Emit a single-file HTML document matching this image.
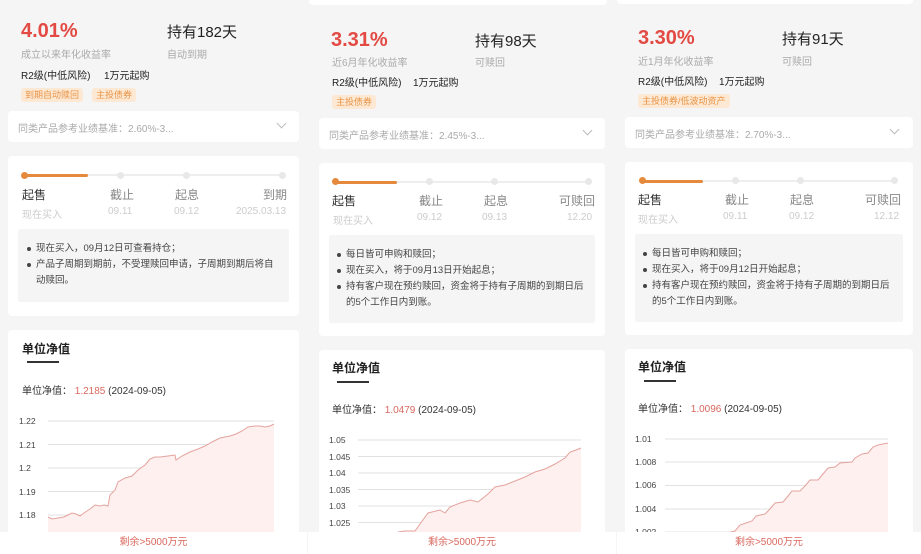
<!DOCTYPE html>
<html><head><meta charset="utf-8">
<style>
*{margin:0;padding:0;box-sizing:border-box}
body{width:921px;height:553px;overflow:hidden;background:#f5f5f5;position:relative;font-family:"Liberation Sans","Noto Sans CJK SC",sans-serif;color:#333}
.a{position:absolute;white-space:nowrap}
.rate{font-size:20px;font-weight:bold;color:#e24a43}
.hold{font-size:15px;color:#222}
.sub{font-size:10px;color:#aaa}
.r2{font-size:10px;color:#222}
.tag{font-size:9px;color:#e89346;background:#fde9d3;border-radius:3px;padding:1px 4px;line-height:12px}
.card{position:absolute;background:#fff;border-radius:4px}
.bench{font-size:10px;color:#aaa}
.chev{width:7px;height:7px;border-right:1px solid #bbb;border-bottom:1px solid #bbb;transform:rotate(45deg)}
.track{height:2px;background:#eee}
.prog{height:3px;background:#e58a3c;border-radius:2px}
.dot{width:7px;height:7px;border-radius:50%;background:#e8e8e8}
.dot.on{background:#e58a3c}
.lab{font-size:12px;color:#888}
.lab.on{color:#333}
.dt{font-size:10px;color:#ccc}
.note{position:absolute;background:#f5f5f5;border-radius:2px}
.note p{font-size:9.5px;color:#444;line-height:16px;padding-left:9px;position:relative}
.note p.b:before{content:"";position:absolute;left:0;top:6px;width:4px;height:4px;border-radius:50%;background:#444}
.ttl{font-size:12px;font-weight:bold;color:#222}
.ul{height:2px;background:#333}
.nv{font-size:10px;color:#333}
.nv span{color:#d9685e}
.ax{font-size:8.5px;color:#444}
.bot{position:absolute;background:#fff;height:22px;text-align:center;font-size:10px;color:#d9685e;line-height:22px}
</style></head><body>

<div class="card" style="left:309px;top:0;width:298px;height:5px;border-radius:0 0 4px 4px"></div>
<div class="card" style="left:617px;top:0;width:296px;height:4px;border-radius:0 0 4px 4px"></div>

<!-- PANEL 1 -->
<div class="a rate" style="left:21px;top:20px">4.01%</div>
<div class="a hold" style="left:167px;top:21px">持有182天</div>
<div class="a sub" style="left:21px;top:46px">成立以来年化收益率</div>
<div class="a sub" style="left:167px;top:46px">自动到期</div>
<div class="a r2" style="left:21px;top:67px">R2级(中低风险)</div>
<div class="a r2" style="left:104px;top:67px">1万元起购</div>
<div class="a tag" style="left:21px;top:88px">到期自动赎回</div>
<div class="a tag" style="left:92px;top:88px">主投债券</div>
<div class="card" style="left:8px;top:111px;width:291px;height:31px"></div>
<div class="a bench" style="left:18px;top:120px">同类产品参考业绩基准：2.60%-3...</div>
<div class="a chev" style="left:278px;top:120px"></div>
<div class="card" style="left:8px;top:156px;width:291px;height:160px"></div>
<div class="a track" style="left:26px;top:174px;width:256px"></div>
<div class="a prog" style="left:26px;top:174px;width:62px"></div>
<div class="a dot on" style="left:21px;top:172px"></div>
<div class="a dot" style="left:117px;top:172px"></div>
<div class="a dot" style="left:183px;top:172px"></div>
<div class="a dot" style="left:279px;top:172px"></div>
<div class="a lab on" style="left:22px;top:186px">起售</div>
<div class="a lab" style="left:110px;top:186px">截止</div>
<div class="a lab" style="left:175px;top:186px">起息</div>
<div class="a lab" style="left:263px;top:186px">到期</div>
<div class="a dt" style="left:22px;top:206px">现在买入</div>
<div class="a dt" style="left:108px;top:206px">09.11</div>
<div class="a dt" style="left:174px;top:206px">09.12</div>
<div class="a dt" style="left:236px;top:206px">2025.03.13</div>
<div class="note" style="left:18px;top:229px;width:271px;height:73px;padding:12px 0 0 9px">
<p class="b">现在买入，09月12日可查看持仓；</p>
<p class="b">产品子周期到期前，不受理赎回申请，子周期到期后将自</p>
<p>动赎回。</p></div>
<div class="card" style="left:8px;top:330px;width:291px;height:223px"></div>
<div class="a ttl" style="left:22px;top:340px">单位净值</div>
<div class="a ul" style="left:27px;top:361px;width:32px"></div>
<div class="a nv" style="left:22px;top:382px">单位净值：&nbsp;<span>1.2185</span> (2024-09-05)</div>
<div class="a ax" style="left:19px;top:416px">1.22</div>
<div class="a ax" style="left:19px;top:440px">1.21</div>
<div class="a ax" style="left:19px;top:463px">1.2</div>
<div class="a ax" style="left:19px;top:487px">1.19</div>
<div class="a ax" style="left:19px;top:510px">1.18</div>

<!-- PANEL 2 -->
<div class="a rate" style="left:331px;top:29px">3.31%</div>
<div class="a hold" style="left:475px;top:30px">持有98天</div>
<div class="a sub" style="left:332px;top:54px">近6月年化收益率</div>
<div class="a sub" style="left:475px;top:54px">可赎回</div>
<div class="a r2" style="left:332px;top:74px">R2级(中低风险)</div>
<div class="a r2" style="left:413px;top:74px">1万元起购</div>
<div class="a tag" style="left:332px;top:95px">主投债券</div>
<div class="card" style="left:319px;top:118px;width:286px;height:31px"></div>
<div class="a bench" style="left:329px;top:127px">同类产品参考业绩基准：2.45%-3...</div>
<div class="a chev" style="left:584px;top:127px"></div>
<div class="card" style="left:319px;top:163px;width:286px;height:173px"></div>
<div class="a track" style="left:336px;top:181px;width:254px"></div>
<div class="a prog" style="left:336px;top:181px;width:61px"></div>
<div class="a dot on" style="left:332px;top:178px"></div>
<div class="a dot" style="left:426px;top:178px"></div>
<div class="a dot" style="left:491px;top:178px"></div>
<div class="a dot" style="left:585px;top:178px"></div>
<div class="a lab on" style="left:332px;top:192px">起售</div>
<div class="a lab" style="left:419px;top:192px">截止</div>
<div class="a lab" style="left:484px;top:192px">起息</div>
<div class="a lab" style="left:559px;top:192px">可赎回</div>
<div class="a dt" style="left:333px;top:212px">现在买入</div>
<div class="a dt" style="left:417px;top:212px">09.12</div>
<div class="a dt" style="left:482px;top:212px">09.13</div>
<div class="a dt" style="left:567px;top:212px">12.20</div>
<div class="note" style="left:329px;top:235px;width:266px;height:88px;padding:12px 0 0 8px">
<p class="b">每日皆可申购和赎回；</p>
<p class="b">现在买入，将于09月13日开始起息；</p>
<p class="b">持有客户现在预约赎回，资金将于持有子周期的到期日后</p>
<p>的5个工作日内到账。</p></div>
<div class="card" style="left:319px;top:350px;width:286px;height:203px"></div>
<div class="a ttl" style="left:332px;top:359px">单位净值</div>
<div class="a ul" style="left:337px;top:381px;width:32px"></div>
<div class="a nv" style="left:332px;top:401px">单位净值：&nbsp;<span>1.0479</span> (2024-09-05)</div>
<div class="a ax" style="left:329px;top:435px">1.05</div>
<div class="a ax" style="left:329px;top:452px">1.045</div>
<div class="a ax" style="left:329px;top:468px">1.04</div>
<div class="a ax" style="left:329px;top:485px">1.035</div>
<div class="a ax" style="left:329px;top:501px">1.03</div>
<div class="a ax" style="left:329px;top:518px">1.025</div>

<!-- PANEL 3 -->
<div class="a rate" style="left:638px;top:27px">3.30%</div>
<div class="a hold" style="left:782px;top:28px">持有91天</div>
<div class="a sub" style="left:638px;top:53px">近1月年化收益率</div>
<div class="a sub" style="left:782px;top:53px">可赎回</div>
<div class="a r2" style="left:638px;top:73px">R2级(中低风险)</div>
<div class="a r2" style="left:719px;top:73px">1万元起购</div>
<div class="a tag" style="left:638px;top:94px">主投债券/低波动资产</div>
<div class="card" style="left:625px;top:117px;width:288px;height:31px"></div>
<div class="a bench" style="left:635px;top:126px">同类产品参考业绩基准：2.70%-3...</div>
<div class="a chev" style="left:891px;top:126px"></div>
<div class="card" style="left:625px;top:162px;width:288px;height:173px"></div>
<div class="a track" style="left:643px;top:180px;width:254px"></div>
<div class="a prog" style="left:643px;top:180px;width:60px"></div>
<div class="a dot on" style="left:639px;top:177px"></div>
<div class="a dot" style="left:732px;top:177px"></div>
<div class="a dot" style="left:797px;top:177px"></div>
<div class="a dot" style="left:891px;top:177px"></div>
<div class="a lab on" style="left:638px;top:191px">起售</div>
<div class="a lab" style="left:725px;top:191px">截止</div>
<div class="a lab" style="left:790px;top:191px">起息</div>
<div class="a lab" style="left:865px;top:191px">可赎回</div>
<div class="a dt" style="left:638px;top:211px">现在买入</div>
<div class="a dt" style="left:723px;top:211px">09.11</div>
<div class="a dt" style="left:789px;top:211px">09.12</div>
<div class="a dt" style="left:874px;top:211px">12.12</div>
<div class="note" style="left:635px;top:234px;width:268px;height:88px;padding:12px 0 0 8px">
<p class="b">每日皆可申购和赎回；</p>
<p class="b">现在买入，将于09月12日开始起息；</p>
<p class="b">持有客户现在预约赎回，资金将于持有子周期的到期日后</p>
<p>的5个工作日内到账。</p></div>
<div class="card" style="left:625px;top:349px;width:288px;height:204px"></div>
<div class="a ttl" style="left:638px;top:358px">单位净值</div>
<div class="a ul" style="left:644px;top:380px;width:32px"></div>
<div class="a nv" style="left:638px;top:400px">单位净值：&nbsp;<span>1.0096</span> (2024-09-05)</div>
<div class="a ax" style="left:635px;top:434px">1.01</div>
<div class="a ax" style="left:635px;top:457px">1.008</div>
<div class="a ax" style="left:635px;top:480px">1.006</div>
<div class="a ax" style="left:635px;top:504px">1.004</div>
<div class="a ax" style="left:635px;top:527px">1.002</div>

<svg class="a" style="left:0;top:0" width="921" height="553">
<g stroke="#e2e2e2" stroke-width="1">
<line x1="48" x2="274" y1="421" y2="421"/><line x1="48" x2="274" y1="444.5" y2="444.5"/><line x1="48" x2="274" y1="468" y2="468"/><line x1="48" x2="274" y1="491.5" y2="491.5"/><line x1="48" x2="274" y1="515" y2="515"/>
<line x1="358" x2="581" y1="440" y2="440"/><line x1="358" x2="581" y1="456.5" y2="456.5"/><line x1="358" x2="581" y1="473" y2="473"/><line x1="358" x2="581" y1="489.5" y2="489.5"/><line x1="358" x2="581" y1="506" y2="506"/><line x1="358" x2="581" y1="522.5" y2="522.5"/>
<line x1="665" x2="888" y1="439" y2="439"/><line x1="665" x2="888" y1="462" y2="462"/><line x1="665" x2="888" y1="485.5" y2="485.5"/><line x1="665" x2="888" y1="509" y2="509"/><line x1="665" x2="888" y1="532" y2="532"/>
</g>
<g fill="#fdf0ef" stroke="none">
<polygon points="48,517 52,519 58,518 64,517 68,515 72,513 76,514 80,516 84,513 90,509 95,505 100,506 104,505 108,506 110,495 115,490 118,482 125,478 132,476 138,470 145,465 150,459 155,457 160,457 168,456 175,455 176,460 182,456 190,452 198,449 205,446 212,442 220,438 225,437 230,436 236,434 242,431 248,427 255,426 260,426 265,427 270,426 274,424 274,553 48,553"/>
<polygon points="398,532 405,531 415,531 420,524 428,513 440,510 445,513 450,507 460,503 470,500 478,502 488,494 495,487 505,485 515,481 525,477 535,472 545,469 555,464 565,458 570,452 576,450 581,448 581,553 398,553"/>
<polygon points="720,537 727,533 735,531 740,525 746,523 752,521 756,516 765,514 770,509 775,503 783,502 788,496 792,491 800,491 805,486 810,480 818,480 823,474 828,468 835,467 840,463 852,462 855,458 862,454 868,453 873,447 878,445 883,444 888,443 888,553 720,553"/>
</g>
<g fill="none" stroke="#e4a39e" stroke-width="1">
<polyline points="48,517 52,519 58,518 64,517 68,515 72,513 76,514 80,516 84,513 90,509 95,505 100,506 104,505 108,506 110,495 115,490 118,482 125,478 132,476 138,470 145,465 150,459 155,457 160,457 168,456 175,455 176,460 182,456 190,452 198,449 205,446 212,442 220,438 225,437 230,436 236,434 242,431 248,427 255,426 260,426 265,427 270,426 274,424"/>
<polyline points="398,532 405,531 415,531 420,524 428,513 440,510 445,513 450,507 460,503 470,500 478,502 488,494 495,487 505,485 515,481 525,477 535,472 545,469 555,464 565,458 570,452 576,450 581,448"/>
<polyline points="720,537 727,533 735,531 740,525 746,523 752,521 756,516 765,514 770,509 775,503 783,502 788,496 792,491 800,491 805,486 810,480 818,480 823,474 828,468 835,467 840,463 852,462 855,458 862,454 868,453 873,447 878,445 883,444 888,443"/>
</g>
</svg>

<div class="bot" style="left:0;top:532px;width:307px">剩余&gt;5000万元</div>
<div class="bot" style="left:308px;top:532px;width:308px">剩余&gt;5000万元</div>
<div class="bot" style="left:617px;top:532px;width:304px">剩余&gt;5000万元</div>
</body></html>
